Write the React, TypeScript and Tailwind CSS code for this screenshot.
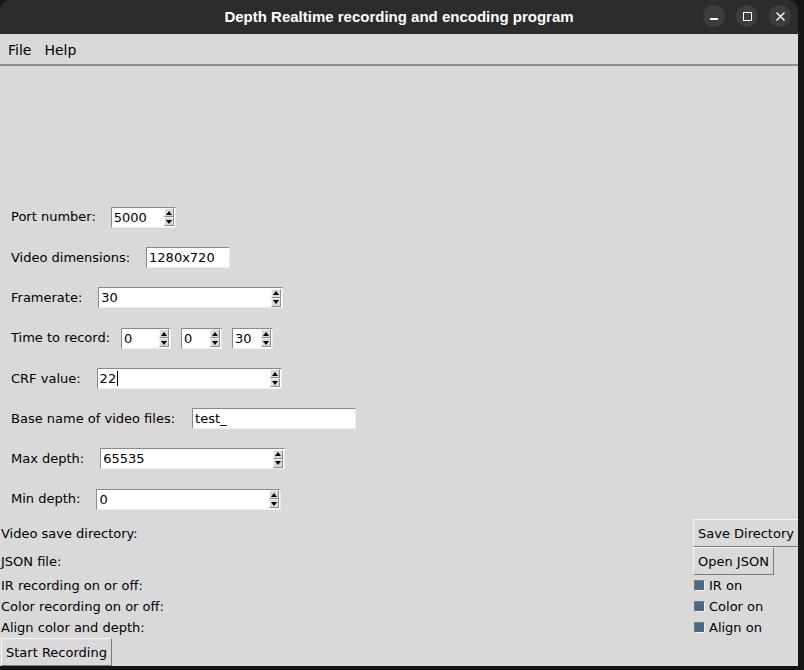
import React from "react";

const font = { fontFamily: '"DejaVu Sans", sans-serif' };

function Arrow({ up }: { up?: boolean }) {
  return (
    <div className="flex h-[9px] w-[10px] items-center justify-center border border-t-[#f4f4f4] border-l-[#f4f4f4] border-b-[#8c8c8c] border-r-[#8c8c8c] bg-[#d9d9d9]">
      <svg width="6" height="4" viewBox="0 0 6 4">
        {up ? <path d="M0 4 L3 0 L6 4 Z" fill="#000" /> : <path d="M0 0 L3 4 L6 0 Z" fill="#000" />}
      </svg>
    </div>
  );
}

function Field({
  className,
  value,
  spin,
  caret,
}: {
  className: string;
  value: string;
  spin?: boolean;
  caret?: boolean;
}) {
  return (
    <div
      className={
        "flex h-[21px] items-center justify-between border border-t-[#8a8a8a] border-l-[#8a8a8a] border-b-[#ececec] border-r-[#ececec] bg-white pl-[2px] pr-[1px] " +
        className
      }
    >
      <span className="flex items-center text-[13px] leading-none text-black">
        {value}
        {caret && <span className="ml-[1px] inline-block h-[15px] w-[1px] bg-black" />}
      </span>
      {spin && (
        <div className="flex flex-col">
          <Arrow up />
          <Arrow />
        </div>
      )}
    </div>
  );
}

function Row({ label, children, gap = "ml-[16px]" }: { label: string; children: React.ReactNode; gap?: string }) {
  return (
    <div className="flex h-[40.3px] shrink-0 items-center pl-[11px]">
      <span className="text-[13px] text-black">{label}</span>
      <div className={"flex items-center " + gap}>{children}</div>
    </div>
  );
}

function TkButton({ text, className = "" }: { text: string; className?: string }) {
  return (
    <div
      className={
        "flex h-[28px] items-center whitespace-nowrap border border-t-[#f6f6f6] border-l-[#f6f6f6] border-b-[#7c7c7c] border-r-[#7c7c7c] bg-[#d9d9d9] px-[4px] text-[13px] text-black " +
        className
      }
    >
      {text}
    </div>
  );
}

function Check({ text }: { text: string }) {
  return (
    <div className="flex h-[21px] items-center pl-[1px] text-[13px] text-black">
      <span className="h-[11px] w-[11px] border border-t-[#7a7a7a] border-l-[#7a7a7a] border-b-[#f2f2f2] border-r-[#f2f2f2] bg-[#4a6984]" />
      <span className="ml-[4px]">{text}</span>
    </div>
  );
}

export default function App() {
  return (
    <div className="relative h-[670px] w-[804px] overflow-hidden bg-[#151515]" style={font}>
      <div className="flex h-[666px] w-[798px] flex-col overflow-hidden">
        {/* Title bar */}
        <div className="relative flex h-[34px] shrink-0 items-center justify-center rounded-t-[10px] bg-[#2c2c2c]">
          <span
            className="text-[15px] font-bold text-white"
            style={{ fontFamily: '"Liberation Sans", sans-serif' }}
          >
            Depth Realtime recording and encoding program
          </span>
          <div className="absolute right-[7px] top-[5px] flex gap-[11px]">
            <div className="flex h-[22px] w-[22px] items-center justify-center rounded-full bg-[#3d3d3d]">
              <span className="mt-[6px] block h-[1.5px] w-[8px] bg-white" />
            </div>
            <div className="flex h-[22px] w-[22px] items-center justify-center rounded-full bg-[#3d3d3d]">
              <span className="block h-[9px] w-[9px] border-[1.5px] border-white" />
            </div>
            <div className="flex h-[22px] w-[22px] items-center justify-center rounded-full bg-[#3d3d3d]">
              <svg width="9" height="9" viewBox="0 0 9 9">
                <path d="M0.5 0.5 L8.5 8.5 M8.5 0.5 L0.5 8.5" stroke="#fff" strokeWidth="1.4" />
              </svg>
            </div>
          </div>
        </div>

        {/* Body */}
        <div className="flex flex-1 flex-col bg-[#d9d9d9]">
          {/* Menu bar */}
          <div className="flex h-[32px] shrink-0 items-center gap-[13px] border-b-2 border-[#8e8e8e] pl-[8px] pt-[2px] text-[14px] text-black">
            <span>File</span>
            <span>Help</span>
          </div>

          <div className="h-[131px] shrink-0" />

          <Row label="Port number:" gap="ml-[15px]">
            <Field className="w-[65px]" value="5000" spin />
          </Row>
          <Row label="Video dimensions:">
            <Field className="w-[84px]" value="1280x720" />
          </Row>
          <Row label="Framerate:">
            <Field className="w-[185px]" value="30" spin />
          </Row>
          <Row label="Time to record:" gap="ml-[11px]">
            <div className="flex gap-[10px]">
              <Field className="w-[50px]" value="0" spin />
              <Field className="w-[41px]" value="0" spin />
              <Field className="w-[41px]" value="30" spin />
            </div>
          </Row>
          <Row label="CRF value:">
            <Field className="w-[185px]" value="22" spin caret />
          </Row>
          <Row label="Base name of video files:" gap="ml-[17px]">
            <Field className="w-[164px]" value="test_" />
          </Row>
          <Row label="Max depth:">
            <Field className="w-[185px]" value="65535" spin />
          </Row>
          <Row label="Min depth:">
            <Field className="w-[185px]" value="0" spin />
          </Row>

          {/* Bottom grid */}
          <div className="grid shrink-0 grid-cols-[1fr_105px] text-[13px] text-black">
            <div className="flex h-[28px] items-center pl-[1px]">Video save directory:</div>
            <div className="flex h-[28px] items-center">
              <TkButton text="Save Directory" />
            </div>
            <div className="flex h-[28px] items-center pl-[1px]">JSON file:</div>
            <div className="flex h-[28px] items-center">
              <TkButton text="Open JSON" />
            </div>
            <div className="flex h-[21px] items-center pl-[1px]">IR recording on or off:</div>
            <Check text="IR on" />
            <div className="flex h-[21px] items-center pl-[1px]">Color recording on or off:</div>
            <Check text="Color on" />
            <div className="flex h-[21px] items-center pl-[1px]">Align color and depth:</div>
            <Check text="Align on" />
            <div className="flex h-[28px] items-center pl-[1px]">
              <TkButton text="Start Recording" />
            </div>
          </div>
        </div>
      </div>
    </div>
  );
}
